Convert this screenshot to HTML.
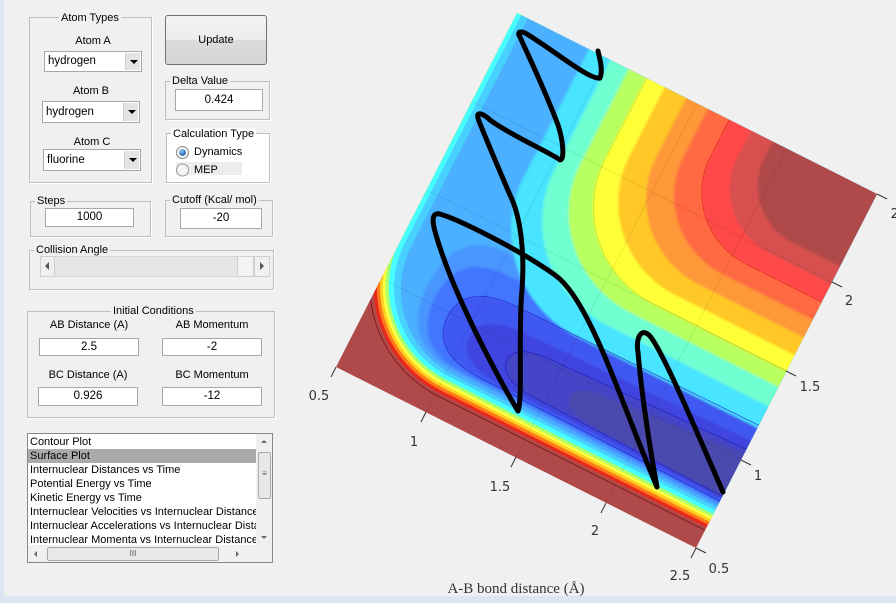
<!DOCTYPE html>
<html><head><meta charset="utf-8"><style>
*{box-sizing:border-box;margin:0;padding:0}
html,body{width:896px;height:603px;overflow:hidden}
body{background:#f0f0f0;position:relative;font-family:"Liberation Sans",Arial,sans-serif;font-size:11px;color:#000}
.a{position:absolute}
.pn{position:absolute;border:1px solid #bfbfbf;box-shadow:1px 1px 0 #fff}
.tt{position:absolute;background:#f0f0f0;padding:0 2px;line-height:12px;white-space:nowrap}
.lb{position:absolute;text-align:center;line-height:12px;white-space:nowrap}
.in{position:absolute;background:#fff;border:1px solid #a8a8a8;text-align:center;font-size:11.5px}
.sel{position:absolute;background:#fff;border:1px solid #a8a8a8;padding-left:3px;font-size:11.5px}
.sel i{position:absolute;right:1px;top:1px;bottom:1px;width:15px;background:#e4e4e4;border-left:1px solid #d0d0d0}
.sel i:after{content:"";position:absolute;left:4px;top:7px;border-left:4px solid transparent;border-right:4px solid transparent;border-top:4px solid #000}
.it{position:absolute;left:2px;height:14px;line-height:14px;white-space:nowrap;font-size:11px}
</style></head><body>
<div class="a" style="left:0;top:0;width:4px;height:603px;background:#dce6f3"></div>
<div class="a" style="left:0;top:596px;width:896px;height:7px;background:#dce6f3"></div>

<div class="pn" style="left:29px;top:17px;width:123px;height:166px"></div>
<div class="tt" style="left:59px;top:12px">Atom Types</div>
<div class="lb" style="left:44px;top:35px;width:98px">Atom A</div>
<div class="sel" style="left:44px;top:51px;width:98px;height:21px;line-height:19px">hydrogen<i></i></div>
<div class="lb" style="left:42px;top:85px;width:98px">Atom B</div>
<div class="sel" style="left:42px;top:101px;width:98px;height:22px;line-height:20px">hydrogen<i></i></div>
<div class="lb" style="left:43px;top:136px;width:98px">Atom C</div>
<div class="sel" style="left:43px;top:149px;width:98px;height:22px;line-height:20px">fluorine<i></i></div>

<div class="a" style="left:165px;top:15px;width:102px;height:50px;border:1px solid #707070;border-radius:3px;background:linear-gradient(#f3f3f3 0,#ececec 50%,#dcdcdc 50%,#d4d4d4 100%);text-align:center;line-height:48px">Update</div>

<div class="pn" style="left:165px;top:81px;width:105px;height:39px"></div>
<div class="tt" style="left:170px;top:75px">Delta Value</div>
<div class="in" style="left:175px;top:89px;width:88px;height:22px;line-height:20px">0.424</div>

<div class="pn" style="left:166px;top:133px;width:104px;height:50px;background:#fff"></div>
<div class="tt" style="left:171px;top:128px;background:#fff">Calculation Type</div>
<div class="a" style="left:176px;top:162px;width:66px;height:13px;background:#ececec"></div>
<svg class="a" style="left:174px;top:144px" width="20" height="34">
<defs><radialGradient id="rg" cx=".4" cy=".35" r=".6"><stop offset="0" stop-color="#8fd0ff"/><stop offset="1" stop-color="#1a5fa8"/></radialGradient></defs>
<circle cx="8.5" cy="8.5" r="6" fill="#f4f4f4" stroke="#8a8a8a"/><circle cx="8.5" cy="8.5" r="3.3" fill="url(#rg)"/>
<circle cx="8.5" cy="26" r="6" fill="#f4f4f4" stroke="#9a9a9a"/></svg>
<div class="a" style="left:194px;top:146px;line-height:12px">Dynamics</div>
<div class="a" style="left:194px;top:164px;line-height:12px">MEP</div>

<div class="pn" style="left:30px;top:201px;width:121px;height:36px"></div>
<div class="tt" style="left:35px;top:195px">Steps</div>
<div class="in" style="left:45px;top:208px;width:89px;height:19px;line-height:17px">1000</div>

<div class="pn" style="left:165px;top:200px;width:108px;height:37px"></div>
<div class="tt" style="left:170px;top:194px">Cutoff (Kcal/ mol)</div>
<div class="in" style="left:180px;top:208px;width:82px;height:21px;line-height:19px">-20</div>

<div class="pn" style="left:29px;top:250px;width:245px;height:40px"></div>
<div class="tt" style="left:34px;top:244px">Collision Angle</div>
<div class="a" style="left:40px;top:256px;width:230px;height:21px;background:#e6e6e6;border:1px solid #d6d6d6"></div>
<div class="a" style="left:40px;top:256px;width:15px;height:21px;background:#f0f0f0;border:1px solid #cfcfcf"></div>
<div class="a" style="left:45px;top:262px;border-top:4px solid transparent;border-bottom:4px solid transparent;border-right:4px solid #555"></div>
<div class="a" style="left:237px;top:256px;width:17px;height:21px;background:#f3f3f3;border:1px solid #cfcfcf"></div>
<div class="a" style="left:254px;top:256px;width:16px;height:21px;background:#f0f0f0;border:1px solid #cfcfcf"></div>
<div class="a" style="left:260px;top:262px;border-top:4px solid transparent;border-bottom:4px solid transparent;border-left:4px solid #555"></div>

<div class="pn" style="left:27px;top:311px;width:248px;height:107px"></div>
<div class="tt" style="left:111px;top:305px">Initial Conditions</div>
<div class="lb" style="left:39px;top:319px;width:100px">AB Distance (A)</div>
<div class="lb" style="left:162px;top:319px;width:100px">AB Momentum</div>
<div class="in" style="left:39px;top:338px;width:100px;height:18px;line-height:16px">2.5</div>
<div class="in" style="left:162px;top:338px;width:100px;height:18px;line-height:16px">-2</div>
<div class="lb" style="left:38px;top:369px;width:100px">BC Distance (A)</div>
<div class="lb" style="left:162px;top:369px;width:100px">BC Momentum</div>
<div class="in" style="left:38px;top:387px;width:100px;height:19px;line-height:17px">0.926</div>
<div class="in" style="left:162px;top:387px;width:100px;height:19px;line-height:17px">-12</div>

<div class="a" style="left:27px;top:433px;width:246px;height:130px;background:#fff;border:1px solid #828790;overflow:hidden">
<div class="a" style="left:0;top:15px;width:228px;height:14px;background:#aaaaaa"></div>
<div class="it" style="top:1px">Contour Plot</div>
<div class="it" style="top:15px">Surface Plot</div>
<div class="it" style="top:29px">Internuclear Distances vs Time</div>
<div class="it" style="top:43px">Potential Energy vs Time</div>
<div class="it" style="top:57px">Kinetic Energy vs Time</div>
<div class="it" style="top:71px;width:226px;overflow:hidden">Internuclear Velocities vs Internuclear Distance</div>
<div class="it" style="top:85px;width:226px;overflow:hidden">Internuclear Accelerations vs Internuclear Distance</div>
<div class="it" style="top:99px;width:226px;overflow:hidden">Internuclear Momenta vs Internuclear Distance</div>
<div class="a" style="left:228px;top:0;width:17px;height:111px;background:#f0f0f0"></div>
<div class="a" style="left:230px;top:18px;width:13px;height:47px;background:#e8e8e8;border:1px solid #a8a8a8;border-radius:2px;text-align:center;line-height:42px;font-size:8px;color:#555">≡</div>
<div class="a" style="left:233px;top:6px;border-left:3px solid transparent;border-right:3px solid transparent;border-bottom:3px solid #666"></div>
<div class="a" style="left:233px;top:102px;border-left:3px solid transparent;border-right:3px solid transparent;border-top:3px solid #666"></div>
<div class="a" style="left:0;top:111px;width:245px;height:18px;background:#f0f0f0"></div>
<div class="a" style="left:19px;top:113px;width:172px;height:14px;background:#e8e8e8;border:1px solid #a8a8a8;border-radius:2px;text-align:center;line-height:12px;font-size:8px;color:#555">III</div>
<div class="a" style="left:6px;top:117px;border-top:3px solid transparent;border-bottom:3px solid transparent;border-right:3px solid #666"></div>
<div class="a" style="left:208px;top:117px;border-top:3px solid transparent;border-bottom:3px solid transparent;border-left:3px solid #666"></div>
</div>

<svg class="a" style="left:0;top:0" width="896" height="603">
<defs>
<clipPath id="cp" clipPathUnits="userSpaceOnUse"><rect x="0" y="0" width="1" height="1"/></clipPath>
<filter id="bl" filterUnits="userSpaceOnUse" x="-1" y="-1" width="3" height="3"><feGaussianBlur stdDeviation="0.003"/></filter>
</defs>
<g transform="matrix(360,181,181,-354,336,367)">
<g clip-path="url(#cp)">
<rect x="-1" y="-1" width="3" height="3" fill="#b04a4a"/>
<rect x="-0.04" y="0.058" width="2" height="2" rx="0.3" fill="#e8281c"/>
<rect x="-0.032" y="0.066" width="2" height="2" rx="0.292" fill="#ff7a18"/>
<rect x="-0.024" y="0.074" width="2" height="2" rx="0.284" fill="#ffd020"/>
<rect x="-0.017" y="0.081" width="2" height="2" rx="0.277" fill="#ffff40"/>
<rect x="-0.01" y="0.088" width="2" height="2" rx="0.27" fill="#a8ff70"/>
<rect x="-0.002" y="0.096" width="2" height="2" rx="0.262" fill="#48ffff"/>
<rect x="0.012" y="0.106" width="2" height="2" rx="0.25" fill="#48d0ff"/>
<rect x="0.03" y="0.115" width="2" height="2" rx="0.24" fill="#4ab0ff"/>
<g filter="url(#bl)">
<path d="M1.3,0.12 L0.27,0.125 Q0.11,0.125 0.11,0.29 Q0.11,0.45 0.25,0.45 L1.3,0.46Z" fill="#4896ff"/>
<path d="M1.3,0.125 L0.29,0.13 Q0.14,0.13 0.14,0.27 Q0.14,0.40 0.28,0.40 L1.3,0.41Z" fill="#4276ff"/>
<path d="M1.3,0.13 L0.34,0.138 Q0.19,0.138 0.19,0.24 Q0.19,0.34 0.34,0.34 L1.3,0.35Z" fill="#3f58f2"/>
<path d="M1.3,0.135 L0.40,0.145 Q0.26,0.145 0.26,0.22 Q0.26,0.29 0.40,0.29 L1.3,0.31Z" fill="#4044e0"/>
<path d="M1.3,0.14 L0.49,0.155 Q0.37,0.155 0.37,0.21 Q0.37,0.26 0.49,0.26 L1.3,0.29Z" fill="#4545c8"/>
<path d="M1.3,0.135 L0.67,0.155 Q0.55,0.155 0.55,0.2 Q0.55,0.24 0.67,0.24 L1.3,0.29Z" fill="#4848ae"/>
<rect x="0.2" y="0.34" width="2" height="2" rx="0.3" fill="#48e4ff"/>
<rect x="0.26" y="0.40" width="2" height="2" rx="0.29" fill="#70ffd0"/>
<rect x="0.31" y="0.455" width="2" height="2" rx="0.28" fill="#b8ff60"/>
<rect x="0.36" y="0.50" width="2" height="2" rx="0.27" fill="#ffff38"/>
<rect x="0.41" y="0.545" width="2" height="2" rx="0.26" fill="#ffc828"/>
<rect x="0.47" y="0.595" width="2" height="2" rx="0.24" fill="#ff9838"/>
<rect x="0.53" y="0.645" width="2" height="2" rx="0.22" fill="#ff6a42"/>
<rect x="0.59" y="0.695" width="2" height="2" rx="0.2" fill="#ff4a4a"/>
<rect x="0.65" y="0.745" width="2" height="2" rx="0.18" fill="#d85050"/>
<rect x="0.71" y="0.795" width="2" height="2" rx="0.16" fill="#b04a4a"/>
</g>
<g fill="none" stroke-width="0.8">
<rect x="-0.05" y="0.05" width="2" height="2" rx="0.31" stroke="#7a1010" vector-effect="non-scaling-stroke"/>
<path d="M1.3,0.13 L0.34,0.138 Q0.19,0.138 0.19,0.24 Q0.19,0.34 0.34,0.34 L1.3,0.35" stroke="#1a1ab8" stroke-opacity="0.7" vector-effect="non-scaling-stroke"/>
<path d="M1.3,0.14 L0.49,0.155 Q0.37,0.155 0.37,0.21 Q0.37,0.26 0.49,0.26 L1.3,0.29" stroke="#1a1ab8" stroke-opacity="0.7" vector-effect="non-scaling-stroke"/>
<rect x="0.59" y="0.695" width="2" height="2" rx="0.2" stroke="#d01010" stroke-opacity="0.6" vector-effect="non-scaling-stroke"/>
<rect x="0.36" y="0.50" width="2" height="2" rx="0.27" stroke="#d0d000" stroke-opacity="0.6" vector-effect="non-scaling-stroke"/>
</g>
<path d="M0.25 0V1M0.5 0V1M0.75 0V1M0 0.25H1M0 0.5H1M0 0.75H1" fill="none" stroke="#000" stroke-opacity="0.1" stroke-width="0.8" vector-effect="non-scaling-stroke"/>
</g></g>
<path d="M723,492 C700,440 665,355 650,336 C640,326 636,340 638,352 C642,400 652,460 657,487 C620,400 590,300 555,275 C520,250 460,220 440,214 C430,212 433,225 436,235 C455,300 505,390 518,411 C523,400 518,330 522,290 C525,250 520,215 510,195 C495,160 480,125 478,118 C476,110 485,115 490,120 C510,135 555,155 560,160 C565,160 563,140 558,125 C545,90 528,55 520,37 C516,31 522,30 530,36 C560,55 590,80 600,78 C603,70 600,60 598,51" fill="none" stroke="#000" stroke-width="5" stroke-linejoin="round" stroke-linecap="round"/>
<g stroke="#333" stroke-width="1">
<path d="M336,367l-5,10M426,412l-5,10M516,457l-5,10M606,503l-5,10M696,548l-5,10"/>
<path d="M696,548l10,5M741,460l10,5M786,371l10,5M832,282l10,5M877,194l10,5"/>
</g>
<g font-family="'DejaVu Sans','Liberation Sans',sans-serif" font-size="13" fill="#333" text-anchor="middle">
<text x="319" y="400">0.5</text><text x="414" y="446">1</text><text x="500" y="491">1.5</text><text x="595" y="535">2</text><text x="680" y="580">2.5</text>
<text x="719" y="573">0.5</text><text x="758" y="480">1</text><text x="810" y="391">1.5</text><text x="849" y="305">2</text><text x="901" y="218">2.5</text>
</g>
<text x="516" y="593" font-family="'Liberation Serif',serif" font-size="15" fill="#333" text-anchor="middle">A-B bond distance (Å)</text>
</svg>
</body></html>
